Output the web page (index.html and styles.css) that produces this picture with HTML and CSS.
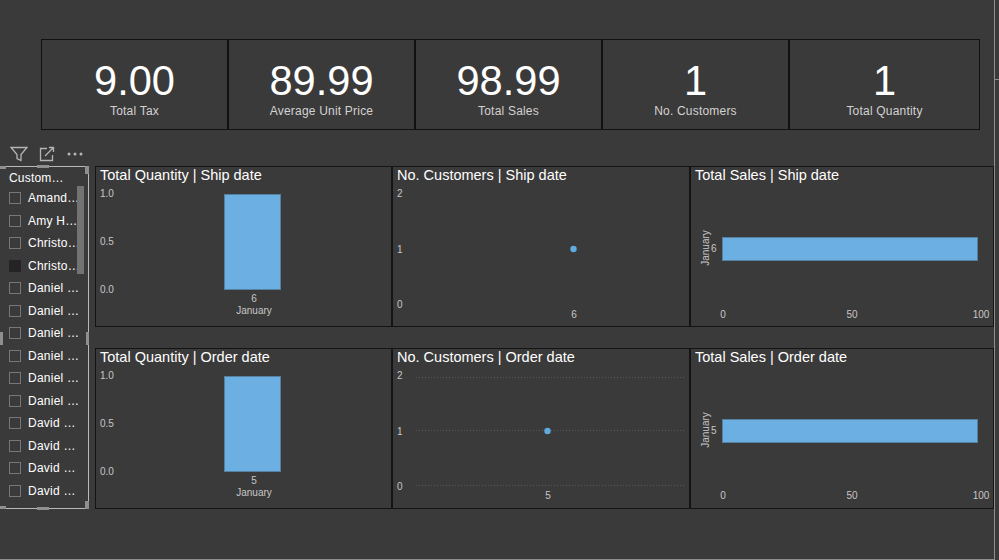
FILE: index.html
```html
<!DOCTYPE html>
<html lang="en">
<head>
<meta charset="utf-8">
<title>Sales dashboard</title>
<link rel="stylesheet" href="styles.css">
</head>
<body>
<div class="stage">
  <span class="tick"></span>
  <section class="kpis">
    <div class="kpi"><div class="kpi-value">9.00</div><div class="kpi-label">Total Tax</div></div>
    <div class="kpi"><div class="kpi-value">89.99</div><div class="kpi-label">Average Unit Price</div></div>
    <div class="kpi"><div class="kpi-value">98.99</div><div class="kpi-label">Total Sales</div></div>
    <div class="kpi"><div class="kpi-value">1</div><div class="kpi-label">No. Customers</div></div>
    <div class="kpi kpi-last"><div class="kpi-value">1</div><div class="kpi-label">Total Quantity</div></div>
  </section>

  <div class="toolbar">
    <svg class="tool tool-filter" viewBox="0 0 18 16"><path d="M1 1.5H17L11 8.5V14.5L7 12.5V8.5Z"/></svg>
    <svg class="tool tool-focus" viewBox="0 0 16 16"><path d="M8 2.5H1.5V14.5H13.5V9M6 10L14.5 1.5M10 1.5H14.5V6"/></svg>
    <svg class="tool tool-more" viewBox="0 0 16 4"><circle cx="2" cy="2" r="1.5"/><circle cx="8" cy="2" r="1.5"/><circle cx="14" cy="2" r="1.5"/></svg>
  </div>

  <div class="main">
    <aside class="slicer">
      <span class="handle h-tl"></span><span class="handle h-tr"></span><span class="handle h-bl"></span><span class="handle h-br"></span>
      <span class="handle h-t"></span><span class="handle h-b"></span><span class="handle h-l"></span><span class="handle h-r"></span>
      <span class="scrollbar"></span>
      <div class="slicer-title">Custom…</div>
      <ul class="slicer-list">
        <li><i class="box"></i>Amand…</li>
        <li><i class="box"></i>Amy H…</li>
        <li><i class="box"></i>Christo…</li>
        <li><i class="box box-on"></i>Christo…</li>
        <li><i class="box"></i>Daniel …</li>
        <li><i class="box"></i>Daniel …</li>
        <li><i class="box"></i>Daniel …</li>
        <li><i class="box"></i>Daniel …</li>
        <li><i class="box"></i>Daniel …</li>
        <li><i class="box"></i>Daniel …</li>
        <li><i class="box"></i>David …</li>
        <li><i class="box"></i>David …</li>
        <li><i class="box"></i>David …</li>
        <li><i class="box"></i>David …</li>
      </ul>
    </aside>

    <section class="charts">
      <article class="chart">
        <h2>Total Quantity | Ship date</h2>
        <svg class="plot" viewBox="0 0 295 139">
          <text class="axis" x="4" y="10">1.0</text><text class="axis" x="4" y="58">0.5</text><text class="axis" x="4" y="106">0.0</text>
          <rect class="bar" x="128.5" y="7.5" width="56" height="95"/>
          <text class="axis mid" x="158" y="115">6</text><text class="axis mid" x="158" y="127">January</text>
        </svg>
      </article>
      <article class="chart">
        <h2>No. Customers | Ship date</h2>
        <svg class="plot" viewBox="0 0 296 139">
          <text class="axis" x="4" y="10">2</text><text class="axis" x="4" y="66">1</text><text class="axis" x="4" y="121">0</text>
          <circle class="dot" cx="180.5" cy="62" r="3.2"/>
          <text class="axis mid" x="181" y="131">6</text>
        </svg>
      </article>
      <article class="chart">
        <h2>Total Sales | Ship date</h2>
        <svg class="plot" viewBox="0 0 302 139">
          <text class="axis mid" transform="translate(18 61) rotate(-90)">January</text>
          <text class="axis" x="20" y="65">6</text>
          <rect class="bar" x="31.5" y="50.5" width="255" height="23"/>
          <text class="axis mid" x="32" y="131">0</text><text class="axis mid" x="161" y="131">50</text><text class="axis mid" x="290" y="131">100</text>
        </svg>
      </article>
      <article class="chart">
        <h2>Total Quantity | Order date</h2>
        <svg class="plot" viewBox="0 0 295 139">
          <text class="axis" x="4" y="10">1.0</text><text class="axis" x="4" y="58">0.5</text><text class="axis" x="4" y="106">0.0</text>
          <rect class="bar" x="128.5" y="7.5" width="56" height="95"/>
          <text class="axis mid" x="158" y="115">5</text><text class="axis mid" x="158" y="127">January</text>
        </svg>
      </article>
      <article class="chart">
        <h2>No. Customers | Order date</h2>
        <svg class="plot" viewBox="0 0 296 139">
          <line class="grid" x1="23" y1="8.5" x2="292" y2="8.5"/><line class="grid" x1="23" y1="61.5" x2="292" y2="61.5"/><line class="grid" x1="23" y1="116.5" x2="292" y2="116.5"/>
          <text class="axis" x="4" y="10">2</text><text class="axis" x="4" y="66">1</text><text class="axis" x="4" y="121">0</text>
          <circle class="dot" cx="154.5" cy="62" r="3.2"/>
          <text class="axis mid" x="155" y="130">5</text>
        </svg>
      </article>
      <article class="chart">
        <h2>Total Sales | Order date</h2>
        <svg class="plot" viewBox="0 0 302 139">
          <text class="axis mid" transform="translate(18 61) rotate(-90)">January</text>
          <text class="axis" x="20" y="65">5</text>
          <rect class="bar" x="31.5" y="50.5" width="255" height="23"/>
          <text class="axis mid" x="32" y="130">0</text><text class="axis mid" x="161" y="130">50</text><text class="axis mid" x="290" y="130">100</text>
        </svg>
      </article>
    </section>
  </div>
</div>
</body>
</html>
```
FILE: styles.css
```css
* { box-sizing: border-box; }
html, body { margin: 0; height: 100%; }
body {
  background: #3b3a3a;
  font-family: "Liberation Sans", Arial, sans-serif;
  color: #fff;
  overflow: hidden;
}
.stage {
  position: relative;
  width: 995px;
  height: 560px;
  padding-top: 39px;
  border-right: 1px solid #8e8e8e;
  border-bottom: 1px solid #8e8e8e;
}
.tick {
  position: absolute;
  left: 994px;
  top: 79px;
  width: 5px;
  height: 1px;
  background: #8e8e8e;
}
.kpis {
  display: grid;
  grid-template-columns: 187px 187px 187px 187px 191px;
  width: 939px;
  height: 91px;
  margin-left: 41px;
}
.kpi {
  border: 1px solid #111;
  text-align: center;
  padding-top: 17px;
}
.kpi-value { font-size: 41.6px; line-height: 47px; }
.kpi-label { font-size: 12px; line-height: 14px; color: #d2d2d2; letter-spacing: 0.2px; }
.toolbar {
  display: flex;
  align-items: center;
  height: 18px;
  margin-top: 15px;
  padding-left: 10px;
}
.tool { display: block; fill: none; stroke: #b5b5b5; stroke-width: 1.3; }
.tool-filter { width: 18px; height: 16px; }
.tool-focus { width: 16px; height: 16px; margin-left: 11px; }
.tool-more { width: 16px; height: 4px; margin-left: 12px; fill: #b5b5b5; stroke: none; }
.main {
  display: flex;
  margin-top: 3px;
}
.slicer {
  position: relative;
  width: 89px;
  height: 343px;
  border: 1px solid #b8b8b8;
  border-left: none;
  flex: none;
}
.slicer-title {
  font-size: 12px;
  line-height: 14px;
  padding: 4px 0 0 9px;
  letter-spacing: 0.2px;
}
.slicer-list {
  list-style: none;
  margin: 2px 0 0;
  padding: 0 0 0 9px;
}
.slicer-list li {
  display: flex;
  align-items: center;
  height: 22.5px;
  font-size: 12px;
  letter-spacing: 0.25px;
  white-space: nowrap;
}
.box {
  display: block;
  width: 12px;
  height: 12px;
  margin-right: 7px;
  border: 1px solid #777;
  flex: none;
}
.box-on { background: #252326; border-color: #252326; }
.scrollbar {
  position: absolute;
  left: 77px;
  top: 19px;
  width: 7px;
  height: 88px;
  background: #737373;
}
.handle { position: absolute; background: #8f8f8f; }
.h-t, .h-b { left: 37px; width: 12px; height: 3px; }
.h-t { top: -2px; }
.h-b { bottom: -2px; }
.h-l, .h-r { top: 165px; width: 3px; height: 13px; }
.h-l { left: 0; }
.h-r { right: -1px; }
.h-tl, .h-tr, .h-bl, .h-br { width: 6px; height: 3px; }
.h-tl { left: 0; top: -1px; }
.h-tr { right: -1px; top: -1px; height: 8px; width: 4px; }
.h-bl { left: 0; bottom: -1px; }
.h-br { right: -1px; bottom: -1px; height: 8px; width: 4px; }
.charts {
  display: grid;
  grid-template-columns: 297px 298px 304px;
  grid-template-rows: 161px 161px;
  row-gap: 21px;
  margin-left: 6px;
  flex: none;
}
.chart {
  border: 1px solid #141414;
  display: flex;
  flex-direction: column;
}
.chart h2 {
  margin: 0;
  height: 20px;
  padding: 1px 0 0 4px;
  font-size: 14.5px;
  line-height: 15px;
  font-weight: 400;
  color: #fff;
}
.plot { display: block; width: 100%; height: 139px; }
.axis { font-size: 10px; fill: #c6c6c6; font-family: "Liberation Sans", Arial, sans-serif; }
.mid { text-anchor: middle; }
.bar { fill: #6cafe3; stroke: #56809f; stroke-width: 1; }
.dot { fill: #5fabdf; }
.grid { stroke: #585858; stroke-width: 1; stroke-dasharray: 1 2; }
```
